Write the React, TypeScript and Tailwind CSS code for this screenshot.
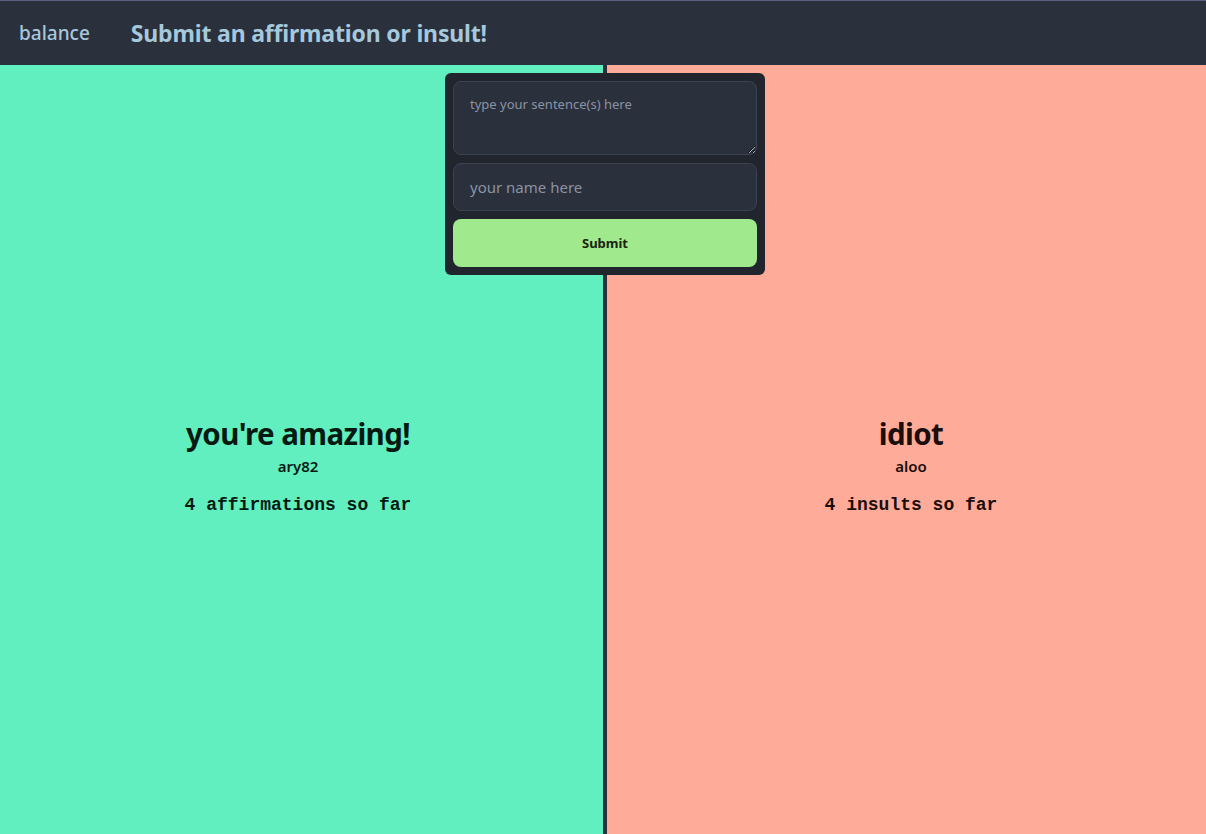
import React from "react";

export default function App() {
  const sans = { fontFamily: '"Noto Sans", "Open Sans", sans-serif' };
  return (
    <div className="flex h-[834px] w-[1206px] flex-col overflow-hidden" style={sans}>
      <header className="flex h-[65px] shrink-0 items-center border-t border-[#5d6080] bg-[#2a303c] text-[#a6c8dc]">
        <span className="ml-[19px] text-[19px] font-medium">balance</span>
        <span className="ml-[41px] text-[23px] font-bold tracking-[-0.17px]">Submit an affirmation or insult!</span>
      </header>
      <main className="relative flex flex-1">
        <section className="flex w-[603px] flex-col items-center justify-center bg-[#62efbf] pr-[7px] pt-[34px] text-[#071a12]">
          <Block title="you're amazing!" name="ary82" count="4 affirmations so far" />
        </section>
        <section className="flex flex-1 flex-col items-center justify-center border-l-4 border-[#2a303c] bg-[#ffab99] pl-[9px] pt-[34px] text-[#1a0d0a]">
          <Block title="idiot" name="aloo" count="4 insults so far" />
        </section>
        <div className="absolute left-[445px] top-[8px] flex w-[320px] flex-col gap-2 rounded-md bg-[#20252e] p-2">
          <textarea
            placeholder="type your sentence(s) here"
            className="h-[74px] rounded-lg border border-[#3b4250] bg-[#2a303c] px-4 py-[13px] text-[13px] text-[#a6adbb] placeholder:text-[#8b93a3] outline-none"
          />
          <input
            placeholder="your name here"
            className="h-12 rounded-lg border border-[#3b4250] bg-[#2a303c] px-4 text-[15px] text-[#a6adbb] placeholder:text-[#8b93a3] outline-none"
          />
          <button className="h-12 rounded-lg bg-[#a0e98c] pt-[1px] text-[13px] font-bold text-[#1a2310]">Submit</button>
        </div>
      </main>
    </div>
  );
}

function Block({ title, name, count }: { title: string; name: string; count: string }) {
  return (
    <div className="flex flex-col items-center">
      <h2 className="text-[29.5px] font-bold leading-[36px] tracking-[-0.6px]">{title}</h2>
      <p className="mt-[4px] text-[15px] font-semibold leading-[20px]">{name}</p>
      <p
        className="mt-[17px] text-[18px] font-bold leading-[24px]"
        style={{ fontFamily: '"Liberation Mono", monospace' }}
      >
        {count}
      </p>
    </div>
  );
}
